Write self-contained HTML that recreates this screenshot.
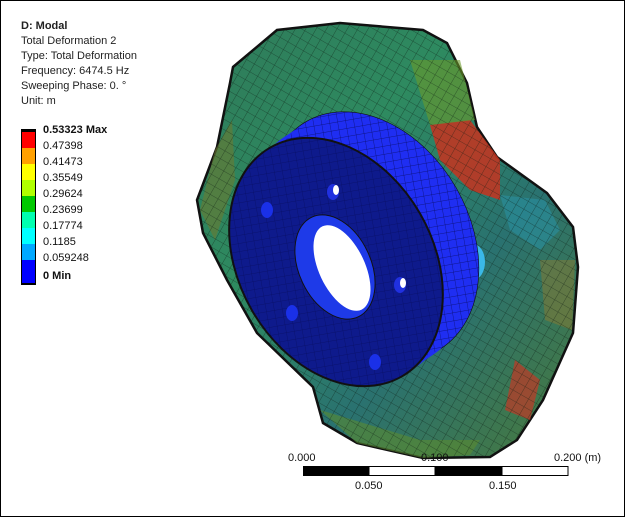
<!DOCTYPE html>
<html><head><style>
body{margin:0;width:625px;height:517px;background:#fff;position:relative;overflow:hidden;font-family:"Liberation Sans",sans-serif;}
.frame{position:absolute;left:0;top:0;width:623px;height:515px;border:1px solid #000;}
.t{position:absolute;left:21px;font-size:11px;color:#222;line-height:15px;}
.lg{position:absolute;left:43px;font-size:11px;color:#111;}
.sw{position:absolute;left:22px;width:13px;height:16px;}
.sb{position:absolute;font-size:11px;color:#111;}
</style></head><body>
<div class="frame"></div>
<div class="t" style="top:19px"><b>D: Modal</b><br>Total Deformation 2<br>Type: Total Deformation<br>Frequency: 6474.5 Hz<br>Sweeping Phase: 0. °<br>Unit: m</div>
<div style="position:absolute;left:21px;top:129px;width:15px;height:156px;background:#000"></div>
<div class="sw" style="top:132px;background:#ff0000"></div>
<div class="sw" style="top:148px;background:#ffa000"></div>
<div class="sw" style="top:164px;background:#ffff00"></div>
<div class="sw" style="top:180px;background:#b0ff00"></div>
<div class="sw" style="top:196px;background:#00c800"></div>
<div class="sw" style="top:212px;background:#00ffb0"></div>
<div class="sw" style="top:228px;background:#00ffff"></div>
<div class="sw" style="top:244px;background:#00a8ff"></div>
<div class="sw" style="top:260px;height:23px;background:#0000ff"></div>
<div class="lg" style="top:124px"><b>0.53323 Max</b></div>
<div class="lg" style="top:140px">0.47398</div>
<div class="lg" style="top:156px">0.41473</div>
<div class="lg" style="top:172px">0.35549</div>
<div class="lg" style="top:188px">0.29624</div>
<div class="lg" style="top:204px">0.23699</div>
<div class="lg" style="top:220px">0.17774</div>
<div class="lg" style="top:236px">0.1185</div>
<div class="lg" style="top:252px">0.059248</div>
<div class="lg" style="top:270px"><b>0 Min</b></div>

<svg style="position:absolute;left:0;top:0" width="625" height="517">
<defs>
<linearGradient id="b" x1="0" y1="0" x2="1" y2="1">
<stop offset="0" stop-color="#2f7a5a"/><stop offset="0.35" stop-color="#2e8a60"/><stop offset="0.65" stop-color="#2a7270"/><stop offset="1" stop-color="#4a7a3a"/></linearGradient>
<pattern id="m" width="9" height="9" patternUnits="userSpaceOnUse" patternTransform="rotate(30)">
<path d="M0 0H9M0 0V9" stroke="#0a1a10" stroke-width="0.8" opacity="0.6"/></pattern>
<pattern id="m2" width="8" height="8" patternUnits="userSpaceOnUse" patternTransform="rotate(20)">
<path d="M0 0H8M0 0V8" stroke="#000030" stroke-width="0.7" opacity="0.7"/></pattern>
</defs>
<path d="M233 67 L277 30 L340 23 L423 30 L447 43 L467 83 L477 127 L497 157 L547 193 L573 227 L578 267 L573 333 L543 400 L517 440 L490 457 L423 458 L357 443 L323 423 L313 387 L257 333 L227 280 L203 233 L197 200 L217 147 L230 83 Z" fill="url(#b)" stroke="#111" stroke-width="2.5"/>
<path d="M200 210 L215 150 L232 120 L235 180 L215 240 Z" fill="#6a7a30" opacity="0.6"/>
<path d="M430 125 L470 120 L500 160 L500 200 L470 190 L440 160 Z" fill="#c8321e" opacity="0.85"/>
<path d="M410 60 L460 60 L475 120 L430 125 Z" fill="#6a9a2a" opacity="0.6"/>
<path d="M500 195 L545 200 L560 230 L540 250 L510 230 Z" fill="#2a90a0" opacity="0.6"/>
<path d="M515 360 L540 380 L530 420 L505 410 Z" fill="#b0402a" opacity="0.8"/>
<path d="M540 260 L575 260 L572 330 L545 320 Z" fill="#8a7a30" opacity="0.5"/>
<path d="M320 410 L420 440 L480 440 L470 455 L423 458 L357 443 Z" fill="#5a8a30" opacity="0.6"/>
<path d="M233 67 L277 30 L340 23 L423 30 L447 43 L467 83 L477 127 L497 157 L547 193 L573 227 L578 267 L573 333 L543 400 L517 440 L490 457 L423 458 L357 443 L323 423 L313 387 L257 333 L227 280 L203 233 L197 200 L217 147 L230 83 Z" fill="url(#m)"/>
<ellipse cx="473" cy="262" rx="12" ry="18" fill="#3ab8e8"/>
<!-- cylinder -->
<g fill="#1f2ef2" stroke="#111" stroke-width="0.6">
<ellipse cx="372" cy="236" rx="97" ry="132" transform="rotate(-30 372 236)"/>
<ellipse cx="363" cy="243" rx="97" ry="132" transform="rotate(-30 363 243)" stroke="none"/>
<ellipse cx="354" cy="249" rx="97" ry="132" transform="rotate(-30 354 249)" stroke="none"/>
<ellipse cx="345" cy="256" rx="97" ry="132" transform="rotate(-30 345 256)" stroke="none"/>
</g>
<ellipse cx="372" cy="236" rx="97" ry="132" transform="rotate(-30 372 236)" fill="url(#m2)"/>
<!-- front face -->
<ellipse cx="336" cy="262" rx="97" ry="132" transform="rotate(-30 336 262)" fill="#0e1a8c" stroke="#111" stroke-width="2"/>
<ellipse cx="336" cy="262" rx="97" ry="132" transform="rotate(-30 336 262)" fill="url(#m2)" opacity="0.6"/>
<ellipse cx="335" cy="267" rx="36" ry="55" transform="rotate(-25 335 267)" fill="#1e3ae8" stroke="#111"/>
<ellipse cx="342" cy="268" rx="23" ry="46" transform="rotate(-25 342 268)" fill="#fff"/>
<ellipse cx="333" cy="192" rx="6" ry="8" fill="#2030e0"/><ellipse cx="336" cy="190" rx="3" ry="5" fill="#fff"/>
<ellipse cx="400" cy="285" rx="6" ry="8" fill="#2030e0"/><ellipse cx="403" cy="283" rx="3" ry="5" fill="#fff"/>
<ellipse cx="267" cy="210" rx="6" ry="8" fill="#1a30e8"/>
<ellipse cx="292" cy="313" rx="6" ry="8" fill="#1a30e8"/>
<ellipse cx="375" cy="362" rx="6" ry="8" fill="#1a30e8"/>
<rect x="303" y="466" width="66" height="10" fill="#000"/>
<rect x="369" y="466.5" width="66" height="9" fill="#fff" stroke="#000"/>
<rect x="435" y="466" width="67" height="10" fill="#000"/>
<rect x="502" y="466.5" width="66" height="9" fill="#fff" stroke="#000"/>
</svg>
<div class="sb" style="left:288px;top:452px">0.000</div>
<div class="sb" style="left:421px;top:452px">0.100</div>
<div class="sb" style="left:554px;top:452px">0.200 (m)</div>
<div class="sb" style="left:355px;top:480px">0.050</div>
<div class="sb" style="left:489px;top:480px">0.150</div>
</body></html>
